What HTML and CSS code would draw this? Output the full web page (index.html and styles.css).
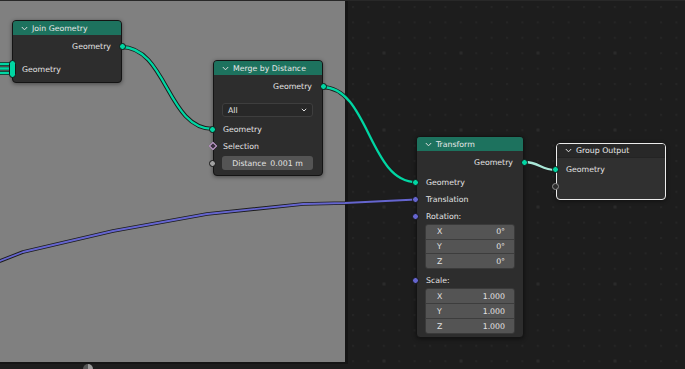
FILE: index.html
```html
<!DOCTYPE html>
<html lang="en">
<head>
  <meta charset="UTF-8">
  <title>Geometry Nodes</title>
  <link rel="stylesheet" href="styles.css">
</head>
<body>
  <div class="editor">
    <svg class="canvas" width="685" height="369" viewBox="0 0 685 369">
      <defs>
        <pattern id="dots" x="13.2" y="6" width="15.4" height="15.4" patternUnits="userSpaceOnUse">
          <rect width="2" height="2" fill="#252525"/>
        </pattern>
        <pattern id="bigdots" x="382.5" y="51.5" width="77" height="77" patternUnits="userSpaceOnUse">
          <rect width="3" height="3" fill="#2a2a2a"/>
        </pattern>
      </defs>
      <rect width="685" height="369" fill="#1d1d1d"/>
      <rect width="685" height="369" fill="url(#dots)"/>
      <rect width="685" height="369" fill="url(#bigdots)"/>
      <rect x="0" y="0" width="685" height="1" fill="#282828"/>

      <!-- backdrop image -->
      <rect x="345" y="1" width="3" height="363" fill="#151515"/>
      <rect x="0" y="362" width="348" height="2" fill="#151515"/>
      <rect x="0" y="1" width="345" height="361" fill="#808080"/>
      <path d="M83 369 a5 5 0 0 1 5 -5 v5 z" fill="#555"/>
      <path d="M88 364 a5 5 0 0 1 5 5 h-5 z" fill="#9a9a9a"/>

      <!-- links -->
      <g fill="none" stroke-linecap="round">
        <g stroke="#1c1c1c" stroke-width="4.2">
          <path d="M0 64 H12 M0 68.5 H12 M0 73 H12"/>
          <path d="M121 47 C167 47 167 129 213 129"/>
          <path d="M322 87 C369 87 369 182 416 182"/>
          <path d="M524 162 C540 162 540 170 556 170"/>
        </g>
        <polyline points="0,261 23,252 113,231 207,214 303,204 345,203 416,199.5" stroke="#1c1c1c" stroke-width="3.6" stroke-linejoin="round"/>
        <polyline points="0,261 23,252 113,231 207,214 303,204 345,203 416,199.5" stroke="#6565cf" stroke-width="1.8" stroke-linejoin="round"/>
        <g stroke="#00d6a3" stroke-width="2.3">
          <path d="M0 64 H12 M0 68.5 H12 M0 73 H12"/>
          <path d="M121 47 C167 47 167 129 213 129"/>
          <path d="M322 87 C369 87 369 182 416 182"/>
        </g>
        <path d="M524 162 C540 162 540 170 556 170" stroke="#a9e6d7" stroke-width="2.3"/>
      </g>
    </svg>

    <div class="node node-join">
      <div class="node-header">
        <svg class="chevron" width="7" height="5" viewBox="0 0 7 5"><path d="M0.8 1 L3.5 3.8 L6.2 1" fill="none" stroke="#ddd" stroke-width="1"/></svg>
        <span>Join Geometry</span>
      </div>
      <div class="node-body">
        <div class="row out"><span>Geometry</span><i class="socket geo right"></i></div>
        <div class="row multi"><i class="socket multi-in"></i><span>Geometry</span></div>
      </div>
    </div>

    <div class="node node-merge">
      <div class="node-header">
        <svg class="chevron" width="7" height="5" viewBox="0 0 7 5"><path d="M0.8 1 L3.5 3.8 L6.2 1" fill="none" stroke="#ddd" stroke-width="1"/></svg>
        <span>Merge by Distance</span>
      </div>
      <div class="node-body">
        <div class="row out"><span>Geometry</span><i class="socket geo right"></i></div>
        <div class="dropdown">
          <span>All</span>
          <svg width="6" height="4" viewBox="0 0 6 4"><path d="M0.8 0.8 L3 3 L5.2 0.8" fill="none" stroke="#ddd" stroke-width="1"/></svg>
        </div>
        <div class="row gap-geo"><i class="socket geo"></i><span>Geometry</span></div>
        <div class="row tight"><i class="socket bool"></i><span>Selection</span></div>
        <div class="slider"><i class="socket float"></i><span>Distance</span><span>0.001 m</span></div>
      </div>
    </div>

    <div class="node node-transform">
      <div class="node-header">
        <svg class="chevron" width="7" height="5" viewBox="0 0 7 5"><path d="M0.8 1 L3.5 3.8 L6.2 1" fill="none" stroke="#ddd" stroke-width="1"/></svg>
        <span>Transform</span>
      </div>
      <div class="node-body">
        <div class="row out"><span>Geometry</span><i class="socket geo right"></i></div>
        <div class="row gap-in"><i class="socket geo"></i><span>Geometry</span></div>
        <div class="row"><i class="socket vec"></i><span>Translation</span></div>
        <div class="row label"><i class="socket vec"></i><span>Rotation:</span></div>
        <div class="vector">
          <div class="vector-row"><span>X</span><span>0°</span></div>
          <div class="vector-row"><span>Y</span><span>0°</span></div>
          <div class="vector-row"><span>Z</span><span>0°</span></div>
        </div>
        <div class="row label gap-scale"><i class="socket vec"></i><span>Scale:</span></div>
        <div class="vector tall">
          <div class="vector-row"><span>X</span><span>1.000</span></div>
          <div class="vector-row"><span>Y</span><span>1.000</span></div>
          <div class="vector-row"><span>Z</span><span>1.000</span></div>
        </div>
      </div>
    </div>

    <div class="node node-output">
      <div class="node-header">
        <svg class="chevron" width="7" height="5" viewBox="0 0 7 5"><path d="M0.8 1 L3.5 3.8 L6.2 1" fill="none" stroke="#ddd" stroke-width="1"/></svg>
        <span>Group Output</span>
      </div>
      <div class="node-body">
        <div class="row"><i class="socket geo"></i><span>Geometry</span></div>
        <div class="row"><i class="socket empty"></i></div>
      </div>
    </div>
  </div>
</body>
</html>
```

FILE: styles.css
```css
* {
  box-sizing: border-box;
}
body {
  margin: 0;
  background: #1d1d1d;
  overflow: hidden;
}
.editor {
  position: relative;
  width: 685px;
  height: 369px;
  overflow: hidden;
  font-family: "DejaVu Sans", sans-serif;
  font-size: 7.8px;
  color: #e4e4e4;
}
.canvas {
  display: block;
}

/* nodes */
.node {
  position: absolute;
  background: #2d2d2d;
  border: 1px solid #141414;
  border-radius: 4px;
  box-shadow: 0 1px 4px rgba(0, 0, 0, 0.45);
}
.node-header {
  height: 14px;
  display: flex;
  align-items: center;
  gap: 4px;
  padding-left: 8px;
  background: #1d725e;
  border-radius: 3px 3px 0 0;
  color: #e8e8e8;
}
.node-body {
  padding: 3px 0 3px;
}
.node-join {
  left: 12px;
  top: 20px;
  width: 110px;
}
.node-merge {
  left: 213px;
  top: 60px;
  width: 110px;
}
.node-merge .node-body {
  padding-bottom: 5px;
}
.node-transform {
  left: 416px;
  top: 136px;
  width: 108px;
}
.node-output {
  left: 556px;
  top: 143px;
  width: 110px;
  border-color: #ececec;
  background: #303030;
}
.node-output .node-header {
  background: #282828;
  border-bottom: 1px solid #242424;
}
.node-output .node-body {
  padding-bottom: 4px;
}

/* rows */
.row {
  position: relative;
  height: 17px;
  display: flex;
  align-items: center;
  padding: 0 9px;
}
.row.out {
  justify-content: flex-end;
  padding-right: 10px;
}
.row.multi {
  height: 20px;
  margin-top: 4px;
}
.row.gap-geo {
  height: 16px;
  margin-top: 4px;
}
.row.tight {
  height: 16px;
  margin-top: 1px;
}
.row.gap-in {
  margin-top: 3px;
}
.row.label {
  height: 16px;
}
.row.gap-scale {
  margin-top: 3px;
}

/* sockets */
.socket {
  position: absolute;
  left: -5px;
  top: 50%;
  width: 7px;
  height: 7px;
  margin-top: -3.5px;
  border-radius: 50%;
  border: 1px solid #141414;
}
.socket.right {
  left: auto;
  right: -5px;
}
.socket.geo {
  background: #00d6a3;
}
.socket.vec {
  background: #6565cf;
}
.socket.float {
  background: #a1a1a1;
}
.socket.bool {
  width: 6px;
  height: 6px;
  margin-top: -3px;
  left: -4px;
  border-radius: 0;
  border: 1.2px solid #d0a8da;
  background: #3b3040;
  transform: rotate(45deg);
}
.socket.empty {
  background: #2d2d2d;
  border: 1px solid #8f8f8f;
}
.socket.multi-in {
  left: -4px;
  width: 7px;
  height: 18px;
  margin-top: -9px;
  border-radius: 3.5px;
  background: #00d6a3;
}

/* widgets */
.dropdown {
  height: 14px;
  margin: 8px 9px 0 8px;
  display: flex;
  align-items: center;
  justify-content: space-between;
  padding: 0 5px 0 5px;
  background: #282828;
  border: 1px solid #3e3e3e;
  border-radius: 3px;
}
.slider {
  position: relative;
  height: 14px;
  margin: 2px 9px 0 8px;
  display: flex;
  align-items: center;
  justify-content: center;
  gap: 4px;
  background: #545454;
  border-radius: 3px;
}
.slider .socket {
  left: -13px;
}
.vector {
  height: 45px;
  margin: 0 8px;
  display: flex;
  flex-direction: column;
  background: #3d3d3d;
  border: 1px solid #3a3a3a;
  border-radius: 3px;
  gap: 1px;
  overflow: hidden;
}
.vector.tall {
  height: 46px;
}
.vector-row {
  flex: 1;
  display: flex;
  align-items: center;
  justify-content: space-between;
  padding: 0 9px 0 11px;
  background: #545454;
}
```
